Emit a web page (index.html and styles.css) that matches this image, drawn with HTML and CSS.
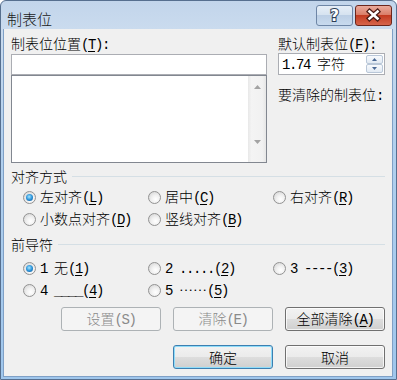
FILE: index.html
```html
<!DOCTYPE html>
<html lang="zh-CN">
<head>
<meta charset="utf-8">
<title>制表位</title>
<link rel="stylesheet" href="styles.css">
</head>
<body>
<div class="window">
  <div class="titlebar">
    <div class="title">制表位</div>
    <div class="caps">
      <div class="cap help">
        <svg width="35" height="19" viewBox="0 0 35 19"><text x="17.5" y="15" text-anchor="middle" class="qm">?</text></svg>
      </div>
      <div class="cap close">
        <svg width="35" height="19" viewBox="0 0 35 19"><path class="xo" d="M13.5 5.5 L21.5 12.5 M21.5 5.5 L13.5 12.5"/><path class="xi" d="M13.5 5.5 L21.5 12.5 M21.5 5.5 L13.5 12.5"/></svg>
      </div>
    </div>
  </div>
  <div class="client">
    <div class="top">
      <div class="lcol">
        <div class="lbl">制表位位置<span class="a">(<u>T</u>):</span></div>
        <div class="input"></div>
        <div class="listbox">
          <div class="vscroll">
            <div class="arr"><svg width="7" height="4" viewBox="0 0 7 4"><path d="M3.5 0 L7 4 L0 4 Z"/></svg></div>
            <div class="track"></div>
            <div class="arr"><svg width="7" height="4" viewBox="0 0 7 4"><path d="M0 0 L7 0 L3.5 4 Z"/></svg></div>
          </div>
        </div>
      </div>
      <div class="rcol">
        <div class="lbl">默认制表位<span class="a">(<u>F</u>):</span></div>
        <div class="spin">
          <span class="val"><span class="a">1.74 </span>字符</span>
          <div class="sbtns">
            <div class="sb"><svg width="5" height="3" viewBox="0 0 5 3"><path d="M2.5 0 L5 3 L0 3 Z"/></svg></div>
            <div class="sb"><svg width="5" height="3" viewBox="0 0 5 3"><path d="M0 0 L5 0 L2.5 3 Z"/></svg></div>
          </div>
        </div>
        <div class="lbl clear">要清除的制表位<span class="a">:</span></div>
      </div>
    </div>

    <div class="ghead"><span>对齐方式</span></div>
    <div class="rgrid">
      <div class="ri"><span class="rb"><span class="dot"></span></span><span class="t">左对齐<span class="a">(<u>L</u>)</span></span></div>
      <div class="ri"><span class="rb"></span><span class="t">居中<span class="a">(<u>C</u>)</span></span></div>
      <div class="ri"><span class="rb"></span><span class="t">右对齐<span class="a">(<u>R</u>)</span></span></div>
      <div class="ri"><span class="rb"></span><span class="t">小数点对齐<span class="a">(<u>D</u>)</span></span></div>
      <div class="ri"><span class="rb"></span><span class="t">竖线对齐<span class="a">(<u>B</u>)</span></span></div>
    </div>

    <div class="ghead g2"><span>前导符</span></div>
    <div class="rgrid lead">
      <div class="ri"><span class="rb"><span class="dot"></span></span><span class="t"><span class="a">1 </span>无<span class="a">(<u>1</u>)</span></span></div>
      <div class="ri"><span class="rb"></span><span class="t"><span class="a">2 .....(<u>2</u>)</span></span></div>
      <div class="ri"><span class="rb"></span><span class="t"><span class="a">3 ----(<u>3</u>)</span></span></div>
      <div class="ri"><span class="rb"></span><span class="t"><span class="a">4 ____(<u>4</u>)</span></span></div>
      <div class="ri"><span class="rb"></span><span class="t"><span class="a">5 </span>……<span class="a">(<u>5</u>)</span></span></div>
    </div>

    <div class="brow">
      <div class="btn dis"><span>设置<span class="a">(S)</span></span></div>
      <div class="btn dis"><span>清除<span class="a">(E)</span></span></div>
      <div class="btn"><span>全部清除<span class="a">(<u>A</u>)</span></span></div>
    </div>
    <div class="brow b2">
      <div class="btn def"><span>确定</span></div>
      <div class="btn"><span>取消</span></div>
    </div>
  </div>
</div>
</body>
</html>
```

FILE: styles.css
```css
* { box-sizing: border-box; }
html, body { margin: 0; padding: 0; }
body {
  width: 397px;
  height: 380px;
  overflow: hidden;
  background: #ffffff;
  font-family: "Noto Sans CJK SC", "Noto Sans CJK JP", sans-serif;
  font-size: 14px;
  font-weight: 300;
  line-height: 16px;
  color: #000;
}
.a {
  font-family: "Liberation Mono", "DejaVu Sans Mono", monospace;
  font-weight: 400;
  letter-spacing: -1.4px;
}
u { text-decoration-thickness: 1px; text-underline-offset: 2px; }

.window {
  width: 397px;
  height: 380px;
  display: flex;
  flex-direction: column;
  border: 1px solid #566f8f;
  border-radius: 6px 6px 0 0;
  padding: 0 3px 2px 2px;
  background: linear-gradient(180deg, #c2d5eb 0, #cadbee 28px, #b2d0ee 140px, #9fc6ec 100%);
}

.titlebar {
  flex: none;
  height: 28px;
  display: flex;
  justify-content: space-between;
  align-items: flex-start;
}
.title {
  margin: 9px 0 0 4px;
  font-size: 15px;
  line-height: 18px;
  color: #1a1a1a;
}
.caps { display: flex; gap: 2px; margin: 4px 1px 0 0; }
.cap { width: 37px; height: 21px; border-radius: 3px; display: flex; }
.help {
  border: 1px solid #6e86a6;
  background: linear-gradient(180deg, #e6eef7 0, #d6e3f0 45%, #bccfe5 50%, #c8daee 100%);
}
.close {
  border: 1px solid #6b261c;
  background: linear-gradient(180deg, #eaaa9b 0, #da7f6a 45%, #c33b21 50%, #d6654c 100%);
}
.qm {
  font-family: "DejaVu Sans", sans-serif;
  font-weight: bold;
  font-size: 15px;
  fill: #ffffff;
  stroke: #2c3e58;
  stroke-width: 2px;
  paint-order: stroke;
}
.xo { stroke: #4a1a14; stroke-width: 5px; fill: none; stroke-linecap: square; }
.xi { stroke: #ffffff; stroke-width: 2.6px; fill: none; stroke-linecap: square; }

.client {
  flex: 1;
  background: #f0f0f0;
  border: 1px solid #7fa0c6;
  border-top: 0;
  padding: 6px 7px 0 7px;
  display: flex;
  flex-direction: column;
}

.top { display: flex; gap: 11px; }
.lcol { width: 256px; display: flex; flex-direction: column; }
.rcol { flex: 1; display: flex; flex-direction: column; }
.lbl { height: 16px; white-space: nowrap; }

.input {
  margin-top: 3px;
  height: 21px;
  border: 1px solid #abadb3;
  background: #fff;
}
.listbox {
  height: 88px;
  border: 1px solid #828790;
  background: #fff;
  display: flex;
  justify-content: flex-end;
}
.vscroll {
  width: 18px;
  display: flex;
  flex-direction: column;
  padding-bottom: 9px;
  background: linear-gradient(90deg, #e8e8e8 0, #f4f4f4 20%, #f1f1f1 80%, #e6e6e6 100%);
}
.arr { height: 22px; display: flex; align-items: center; justify-content: center; }
.arr path { fill: #a3a3a3; }
.track { flex: 1; }

.spin {
  margin-top: 2px;
  height: 22px;
  border: 1px solid #abadb3;
  background: #fff;
  display: flex;
  align-items: center;
  justify-content: space-between;
  padding: 0 1px 0 3px;
}
.val { white-space: nowrap; }
.sbtns { width: 17px; height: 18px; display: flex; flex-direction: column; }
.sb {
  flex: 1;
  border: 1px solid #b9c7d8;
  border-radius: 2px;
  background: linear-gradient(180deg, #f8fafd 0, #e2eaf3 100%);
  display: flex;
  align-items: center;
  justify-content: center;
}
.sb path { fill: #4c6a96; }
.clear { margin-top: 11px; }

.ghead {
  display: flex;
  align-items: center;
  gap: 5px;
  height: 16px;
  margin-top: 5px;
  white-space: nowrap;
}
.ghead::after { content: ""; flex: 1; height: 1px; background: #d5dfe5; }
.ghead.g2 { margin-top: 6px; }

.rgrid {
  display: grid;
  grid-template-columns: 125px 125px 1fr;
  grid-auto-rows: 22px;
  padding-left: 12px;
  margin-top: 2px;
}
.rgrid.lead { margin-top: 5px; }
.ri { display: flex; align-items: center; gap: 4px; white-space: nowrap; }
.rb {
  flex: none;
  width: 13px;
  height: 13px;
  border-radius: 50%;
  border: 1px solid #929292;
  background: radial-gradient(circle at 60% 65%, #ffffff 0, #f1f1f1 40%, #cfcfcf 100%);
  display: flex;
  align-items: center;
  justify-content: center;
}
.dot {
  width: 7px;
  height: 7px;
  border-radius: 50%;
  background: radial-gradient(circle at 45% 40%, #a6e6ff 0, #2d95da 50%, #0b4c8c 100%);
}

.brow { display: flex; justify-content: flex-end; gap: 12px; margin-top: 6px; }
.brow.b2 { margin-top: 14px; }
.btn {
  width: 100px;
  height: 24px;
  border: 1px solid #707070;
  border-radius: 3px;
  background: linear-gradient(180deg, #f2f2f2 0, #ebebeb 50%, #dddddd 51%, #cfcfcf 100%);
  box-shadow: inset 0 0 0 1px rgba(255, 255, 255, 0.75);
  display: flex;
  align-items: center;
  justify-content: center;
  white-space: nowrap;
}
.btn.dis {
  border-color: #adb2b5;
  background: #f4f4f4;
  box-shadow: none;
  color: #8a8a8a;
}
.btn.def {
  border-color: #3c7fb1;
  box-shadow: inset 0 0 0 1px #8fdcf9;
}
```
